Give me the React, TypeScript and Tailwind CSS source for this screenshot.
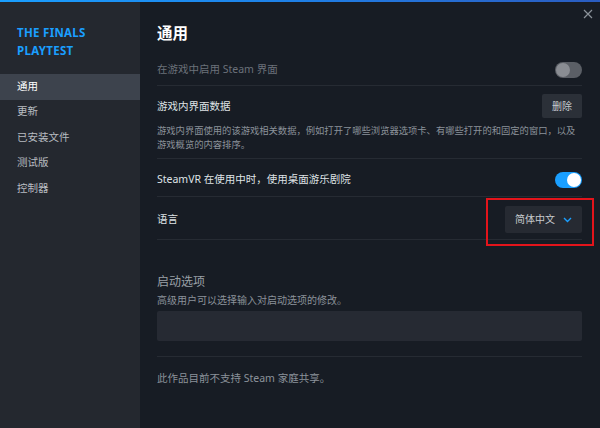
import React from "react";

const Toggle = ({ on }: { on: boolean }) =>
  on ? (
    <div className="w-[27px] h-[16px] rounded-full bg-[#1a9fff] flex items-center justify-end pr-[1px]">
      <div className="w-[14px] h-[14px] rounded-full bg-white" />
    </div>
  ) : (
    <div className="w-[27px] h-[16px] rounded-full bg-[#5b5f66] flex items-center justify-start pl-[1px]">
      <div className="w-[14px] h-[14px] rounded-full bg-[#8a8d93]" />
    </div>
  );

export default function App() {
  const nav = ["通用", "更新", "已安装文件", "测试版", "控制器"];
  return (
    <div
      className="w-[600px] h-[428px] flex flex-col overflow-hidden bg-[#171c24]"
      style={{ fontFamily: '"Noto Sans", "Noto Sans CJK SC", sans-serif' }}
    >
      <div className="h-[2px] w-full shrink-0 bg-gradient-to-r from-[#1a9fff] via-[#1e7fe6] to-[#2a5cc0]" />
      <div className="flex flex-1 min-h-0">
        <aside className="w-[140px] shrink-0 bg-[#24282f] flex flex-col">
          <div className="pt-[22px] pl-[17px] text-[11.5px] leading-[18px] font-bold text-[#1a9fff] tracking-[0.3px]">
            <div>THE FINALS</div>
            <div>PLAYTEST</div>
          </div>
          <nav className="mt-[14px] flex flex-col">
            {nav.map((n, i) => (
              <div
                key={n}
                className={
                  "h-[25.5px] flex items-center pl-[17px] text-[10.5px] " +
                  (i === 0 ? "bg-[#3d434d] text-white" : "text-[#b8bcc1]")
                }
              >
                {n}
              </div>
            ))}
          </nav>
        </aside>
        <main className="flex-1 min-w-0 relative pl-[17px] pr-[18px] pt-[21px]">
          <svg
            className="absolute right-[7px] top-[7px]"
            width="10"
            height="10"
            viewBox="0 0 10 10"
            fill="none"
            stroke="#8b929a"
            strokeWidth="1.2"
          >
            <path d="M1 1L9 9M9 1L1 9" />
          </svg>
          <h1 className="text-[15.5px] leading-[20px] font-bold text-white">通用</h1>

          <div className="mt-[12px] h-[31px] flex items-center justify-between border-b border-[#262b33]">
            <span className="text-[10.5px] text-[#6b717a]">在游戏中启用 Steam 界面</span>
            <Toggle on={false} />
          </div>

          <div className="border-b border-[#262b33] pt-[8px] pb-[6px]">
            <div className="h-[24px] flex items-center justify-between">
              <span className="text-[10.5px] text-[#dfe3e6] pt-[1px]">游戏内界面数据</span>
              <button className="h-[24px] px-[10px] bg-[#2b3038] rounded-[2px] text-[10px] text-[#c6cace]">
                删除
              </button>
            </div>
            <div className="mt-[6px] text-[9.3px] leading-[14px] text-[#8b929a]">
              <div className="whitespace-nowrap">
                游戏内界面使用的该游戏相关数据，例如打开了哪些浏览器选项卡、有哪些打开的和固定的窗口，以及
              </div>
              <div>游戏概览的内容排序。</div>
            </div>
          </div>

          <div className="h-[38px] pt-[5px] flex items-center justify-between border-b border-[#262b33]">
            <span className="text-[10.5px] text-[#dfe3e6]">SteamVR 在使用中时，使用桌面游乐剧院</span>
            <Toggle on={true} />
          </div>

          <div className="pt-[9px] pb-[6px] flex items-center justify-between border-b border-[#262b33]">
            <span className="text-[10.5px] text-[#dfe3e6]">语言</span>
            <div className="relative">
              <div className="h-[27px] w-[77px] pl-[10px] bg-[#262a32] rounded-[2px] flex items-center gap-[8px]">
                <span className="text-[10px] text-[#c6cace]">简体中文</span>
                <svg width="9" height="6" viewBox="0 0 9 6" fill="none" stroke="#1a9fff" strokeWidth="1.4">
                  <path d="M1 1L4.5 4.5L8 1" />
                </svg>
              </div>
              <div className="absolute -left-[19px] -right-[12px] -top-[8px] -bottom-[13px] border-2 border-[#e3141b]" />
            </div>
          </div>

          <div className="mt-[34px] text-[12px] leading-[16px] text-[#9aa0a7]">启动选项</div>
          <div className="mt-[3px] text-[10px] leading-[14px] text-[#8b929a]">高级用户可以选择输入对启动选项的修改。</div>
          <div className="mt-[4px] h-[30px] bg-[#262a33] rounded-[2px]" />
          <div className="mt-[15px] border-b border-[#262b33]" />
          <div className="mt-[14px] text-[10.5px] leading-[14px] text-[#8b929a]">此作品目前不支持 Steam 家庭共享。</div>
        </main>
      </div>
    </div>
  );
}
